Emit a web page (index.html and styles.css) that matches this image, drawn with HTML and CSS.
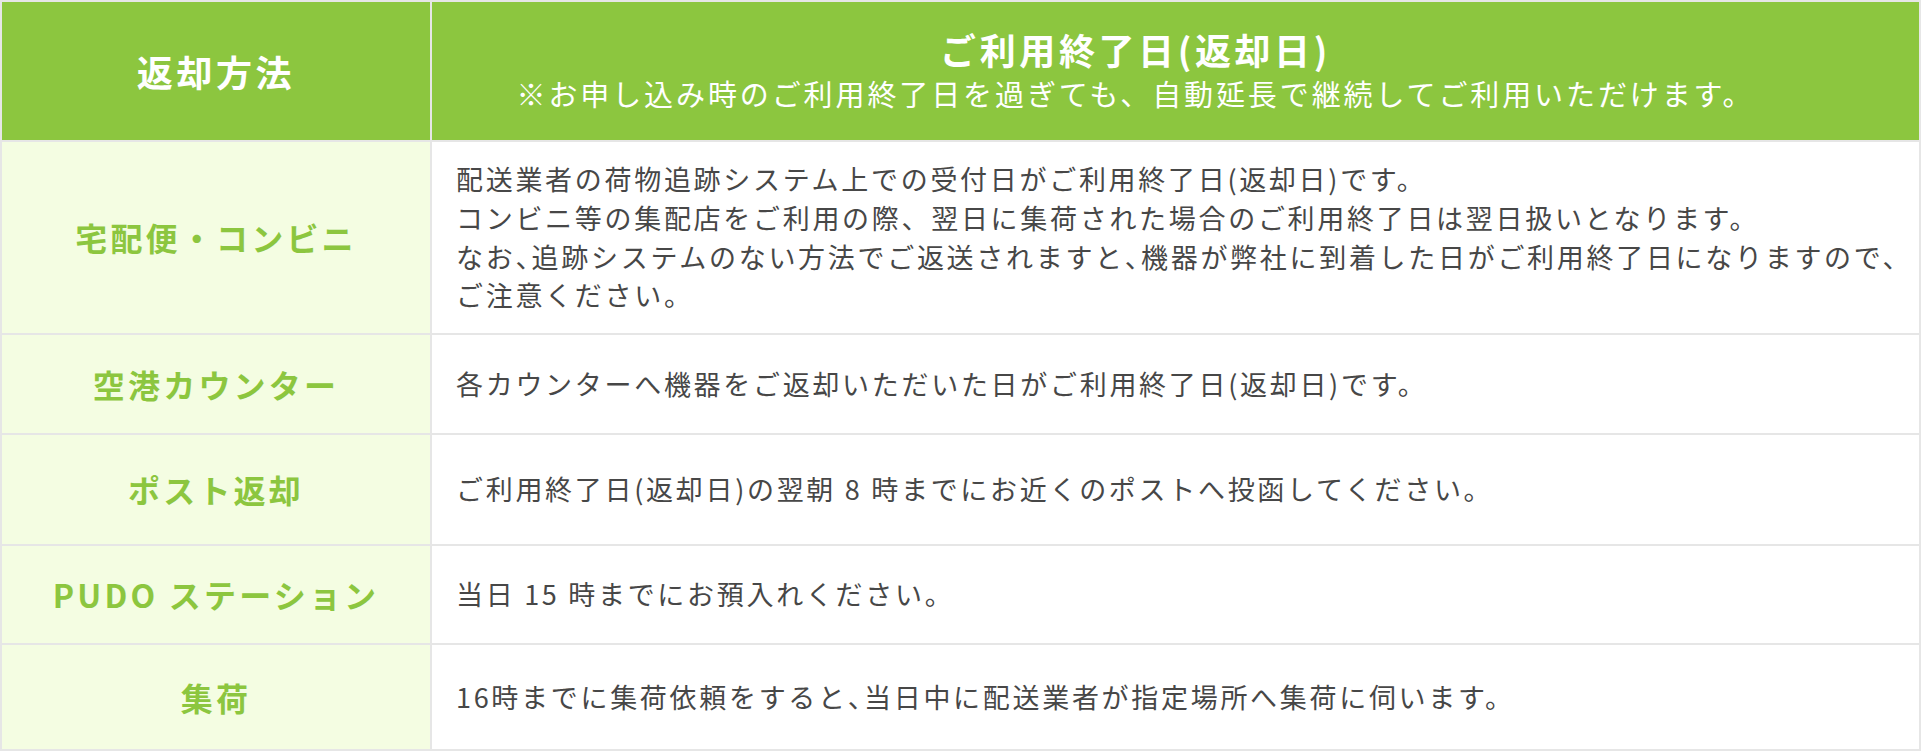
FILE: index.html
```html
<!DOCTYPE html>
<html lang="ja">
<head>
<meta charset="utf-8">
<title>返却方法</title>
<link rel="stylesheet" href="styles.css">
</head>
<body>
<table class="return-table">
  <colgroup>
    <col class="col-method">
    <col class="col-detail">
  </colgroup>
  <thead>
    <tr class="row-head">
      <th class="head-method">返却方法</th>
      <th class="head-detail">
        <div class="head-title">ご利用終了日(返却日)</div>
        <div class="head-note">※お申し込み時のご利用終了日を過ぎても、自動延長で継続してご利用いただけます。</div>
      </th>
    </tr>
  </thead>
  <tbody>
    <tr class="row-1">
      <th class="method">宅配便・コンビニ</th>
      <td class="detail">配送業者の荷物追跡システム上での受付日がご利用終了日(返却日)です。<br>コンビニ等の集配店をご利用の際、翌日に集荷された場合のご利用終了日は翌日扱いとなります。<br>なお<span class="tc">、</span>追跡システムのない方法でご返送されますと<span class="tc">、</span>機器が弊社に到着した日がご利用終了日になりますので、<br>ご注意ください。</td>
    </tr>
    <tr class="row-2">
      <th class="method">空港カウンター</th>
      <td class="detail">各カウンターへ機器をご返却いただいた日がご利用終了日(返却日)です。</td>
    </tr>
    <tr class="row-3">
      <th class="method">ポスト返却</th>
      <td class="detail">ご利用終了日(返却日)の翌朝 8 時までにお近くのポストへ投函してください。</td>
    </tr>
    <tr class="row-4">
      <th class="method">PUDO ステーション</th>
      <td class="detail">当日 15 時までにお預入れください。</td>
    </tr>
    <tr class="row-5">
      <th class="method">集荷</th>
      <td class="detail">16時までに集荷依頼をすると<span class="tc">、</span>当日中に配送業者が指定場所へ集荷に伺います。</td>
    </tr>
  </tbody>
</table>
</body>
</html>
```

FILE: styles.css
```css
html, body {
  margin: 0;
  padding: 0;
  background: #ffffff;
}

body {
  font-family: "Noto Sans CJK JP", "Noto Sans", sans-serif;
  color: #4a4a4a;
}

.return-table {
  width: 1921px;
  table-layout: fixed;
  border-collapse: separate;
  border-spacing: 0;
  border-top: 2px solid #e6e6e6;
  border-left: 2px solid #e6e6e6;
}

.col-method {
  width: 430px;
}

.return-table th,
.return-table td {
  border-right: 2px solid #e6e6e6;
  border-bottom: 2px solid #e6e6e6;
  vertical-align: middle;
  padding: 0;
}

.row-head th {
  background: #8cc63f;
  color: #ffffff;
  text-align: center;
}

.row-head { height: 140px; }
.row-1 { height: 193px; }
.row-2 { height: 100px; }
.row-3 { height: 111px; }
.row-4 { height: 99px; }
.row-5 { height: 106px; }

.head-method {
  font-size: 36px;
  font-weight: 700;
  letter-spacing: 0.1em;
  line-height: 1.25;
}

.return-table .head-detail {
  padding-right: 80px;
}

.head-title {
  font-size: 36px;
  font-weight: 700;
  letter-spacing: 0.1em;
  line-height: 1.25;
}

.head-note {
  font-size: 29px;
  font-weight: 400;
  letter-spacing: 0.1em;
  line-height: 1.5;
}

.method {
  background: #f4fde2;
  color: #8cc63f;
  font-size: 32px;
  font-weight: 700;
  letter-spacing: 0.1em;
  line-height: 1.4;
  text-align: center;
}

.return-table .detail {
  background: #ffffff;
  color: #474747;
  font-size: 27px;
  font-weight: 400;
  letter-spacing: 0.1em;
  line-height: 1.44;
  text-align: left;
  white-space: nowrap;
  padding: 0 10px 0 24px;
}

.tc {
  font-feature-settings: "halt";
}
```
